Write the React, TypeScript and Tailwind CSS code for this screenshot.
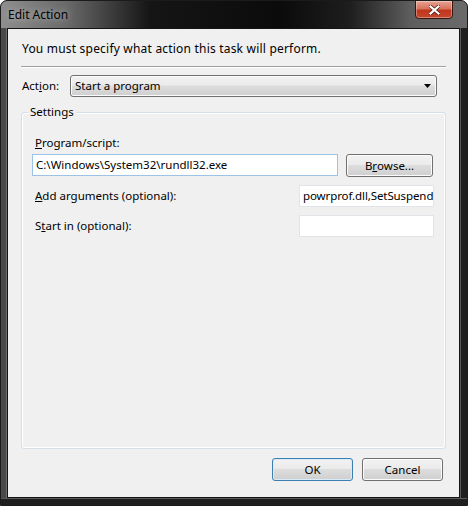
import React from "react";

const font = { fontFamily: '"Segoe UI", "Noto Sans", sans-serif' };

const Btn: React.FC<{ children: React.ReactNode; primary?: boolean; className?: string }> = ({
    children,
    primary,
    className = "",
}) => (
    <div
        className={`flex h-[23px] items-center justify-center rounded-[3px] border bg-[linear-gradient(#f2f2f2_0%,#ebebeb_45%,#dddddd_50%,#cfcfcf_100%)] text-black ${
            primary ? "border-[#3c7fb1] shadow-[inset_0_0_0_1px_#d7ecf8]" : "border-[#707070] shadow-[inset_0_0_0_1px_#fcfcfc]"
        } ${className}`}
    >
        {children}
    </div>
);

const Field: React.FC<{ value?: string; className?: string; focused?: boolean }> = ({ value = "", className = "", focused }) => (
    <div
        className={`flex h-[22px] items-center overflow-hidden whitespace-nowrap border bg-white px-[3px] text-black ${
            focused ? "border-[#9cc3e6]" : "border-[#e1e4e8]"
        } ${className}`}
    >
        {value}
    </div>
);

export default function App() {
    return (
        <div
            style={font}
            className="flex h-[506px] w-[468px] flex-col overflow-hidden rounded-t-[7px] border border-[#1b1b1b] bg-[#2a2a2a] text-[11.5px]"
        >
            {/* title bar */}
            <div className="relative flex h-[27px] shrink-0 items-center bg-[linear-gradient(90deg,#8e8e8e_0%,#6a6a6a_14%,#151515_32%,#0b0b0b_60%,#1e1e1e_75%,#5e5e5e_88%,#6a6a6a_100%)] pl-[7px]">
                <span className="text-[12px] text-black [text-shadow:0_0_6px_#c8c8c8]">Edit Action</span>
                <div className="absolute right-[14px] top-[-1px] flex h-[19px] w-[38px] items-center justify-center rounded-b-[4px] border border-[#3b1410] bg-[linear-gradient(#e7a493_0%,#d7715c_45%,#c1361d_55%,#c4472c_100%)] shadow-[inset_0_0_0_1px_rgba(255,255,255,0.35)]">
                    <svg width="11" height="10" viewBox="0 0 11 10">
                        <path d="M1.5 1.5 L9.5 8.5 M9.5 1.5 L1.5 8.5" stroke="#3a1a14" strokeWidth="3.6" strokeLinecap="square" />
                        <path d="M1.5 1.5 L9.5 8.5 M9.5 1.5 L1.5 8.5" stroke="#ffffff" strokeWidth="2.2" strokeLinecap="square" />
                    </svg>
                </div>
            </div>

            <div className="flex min-h-0 flex-1">
                <div className="w-[6px] shrink-0 border-r border-[#6d6d6d] bg-[#4a4a4a]" />
                {/* client area */}
                <div className="flex min-w-0 flex-1 flex-col border border-[#141414] bg-[#f0f0f0] px-[13px] text-black">
                    <div className="pl-[1px] pt-[12px] text-[12px] leading-[16px] tracking-[0.2px]">
                        You must specify what action this task will perform.
                    </div>
                    <div className="mt-[9px] h-px bg-[#a0a0a0] shadow-[0_1px_0_#ffffff]" />

                    <div className="mt-[8px] flex items-center">
                        <span className="w-[49px] pl-[1px]">
                            Act<span className="underline">i</span>on:
                        </span>
                        <div className="flex h-[22px] w-[367px] items-center justify-between rounded-[3px] border border-[#707070] bg-[linear-gradient(#f2f2f2_0%,#ebebeb_45%,#dddddd_50%,#cfcfcf_100%)] pl-[4px] pr-[5px] shadow-[inset_0_0_0_1px_#fcfcfc]">
                            <span>Start a program</span>
                            <svg width="7" height="4" viewBox="0 0 7 4">
                                <path d="M0 0 H7 L3.5 4 Z" fill="#000" />
                            </svg>
                        </div>
                    </div>

                    {/* Settings group */}
                    <div className="relative mt-[15px] h-[337px] rounded-[3px] border border-[#d5dfe5] shadow-[inset_0_0_0_1px_#ffffff]">
                        <span className="absolute left-[6px] top-[-9px] bg-[#f0f0f0] px-[2px] leading-[16px]">Settings</span>
                        <div className="flex flex-col pl-[10px] pr-[11px] pt-[22px]">
                            <div className="pl-[3px] leading-[16px]">
                                <span className="underline">P</span>rogram/script:
                            </div>
                            <div className="mt-[1px] flex items-center">
                                <Field value={"C:\\Windows\\System32\\rundll32.exe"} focused className="w-[306px]" />
                                <Btn className="ml-[8px] mt-[2px] w-[87px]">
                                    B<span className="underline">r</span>owse...
                                </Btn>
                            </div>
                            <div className="mt-[8px] flex items-center justify-between">
                                <span className="pl-[3px]">
                                    <span className="underline">A</span>dd arguments (optional):
                                </span>
                                <Field value="powrprof.dll,SetSuspend" className="w-[135px] tracking-[-0.1px]" />
                            </div>
                            <div className="mt-[8px] flex items-center justify-between">
                                <span className="pl-[3px]">
                                    S<span className="underline">t</span>art in (optional):
                                </span>
                                <Field className="w-[135px]" />
                            </div>
                        </div>
                    </div>

                    <div className="mt-[9px] flex justify-end gap-[9px] pr-[3px]">
                        <Btn primary className="w-[81px]">OK</Btn>
                        <Btn className="w-[81px]">Cancel</Btn>
                    </div>
                </div>
                <div className="w-[7px] shrink-0 border-l border-[#5a5a5a] bg-[#1f1f1f]" />
            </div>
            <div className="h-[7px] shrink-0 border-t border-[#5a5a5a] bg-[#1f1f1f]" />
        </div>
    );
}
